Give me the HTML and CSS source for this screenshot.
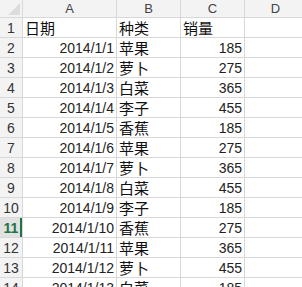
FILE: index.html
```html
<!DOCTYPE html>
<html lang="zh-CN">
<head>
    <meta charset="UTF-8">
    <title>Sheet1</title>
    <link rel="stylesheet" href="styles.css">
</head>
<body>
    <div class="sheet">
        <div class="corner"><span class="corner-mark"></span></div>
        <div class="col-head">A</div>
        <div class="col-head">B</div>
        <div class="col-head">C</div>
        <div class="col-head">D</div>

        <div class="row-head">1</div>
        <div class="cell txt">日期</div><div class="cell txt">种类</div><div class="cell txt">销量</div><div class="cell"></div>

        <div class="row-head">2</div>
        <div class="cell num">2014/1/1</div><div class="cell txt">苹果</div><div class="cell num">185</div><div class="cell"></div>

        <div class="row-head">3</div>
        <div class="cell num">2014/1/2</div><div class="cell txt">萝卜</div><div class="cell num">275</div><div class="cell"></div>

        <div class="row-head">4</div>
        <div class="cell num">2014/1/3</div><div class="cell txt">白菜</div><div class="cell num">365</div><div class="cell"></div>

        <div class="row-head">5</div>
        <div class="cell num">2014/1/4</div><div class="cell txt">李子</div><div class="cell num">455</div><div class="cell"></div>

        <div class="row-head">6</div>
        <div class="cell num">2014/1/5</div><div class="cell txt">香蕉</div><div class="cell num">185</div><div class="cell"></div>

        <div class="row-head">7</div>
        <div class="cell num">2014/1/6</div><div class="cell txt">苹果</div><div class="cell num">275</div><div class="cell"></div>

        <div class="row-head">8</div>
        <div class="cell num">2014/1/7</div><div class="cell txt">萝卜</div><div class="cell num">365</div><div class="cell"></div>

        <div class="row-head">9</div>
        <div class="cell num">2014/1/8</div><div class="cell txt">白菜</div><div class="cell num">455</div><div class="cell"></div>

        <div class="row-head">10</div>
        <div class="cell num">2014/1/9</div><div class="cell txt">李子</div><div class="cell num">185</div><div class="cell"></div>

        <div class="row-head active">11</div>
        <div class="cell num">2014/1/10</div><div class="cell txt">香蕉</div><div class="cell num">275</div><div class="cell"></div>

        <div class="row-head">12</div>
        <div class="cell num">2014/1/11</div><div class="cell txt">苹果</div><div class="cell num">365</div><div class="cell"></div>

        <div class="row-head">13</div>
        <div class="cell num">2014/1/12</div><div class="cell txt">萝卜</div><div class="cell num">455</div><div class="cell"></div>

        <div class="row-head">14</div>
        <div class="cell num">2014/1/13</div><div class="cell txt">白菜</div><div class="cell num">185</div><div class="cell"></div>
    </div>
</body>
</html>
```

FILE: styles.css
```css
html, body {
    margin: 0;
    padding: 0;
    background: #fff;
    overflow: hidden;
}

.sheet {
    display: grid;
    grid-template-columns: 22px 93px 63px 63px 61px;
    grid-template-rows: 17px repeat(14, 19px);
    gap: 1px;
    background: #d8d8d8;
    width: max-content;
    font-family: "Liberation Sans", "Noto Sans CJK SC", sans-serif;
    font-size: 14px;
    color: #222;
}

.corner {
    position: relative;
    background: #f3f3f3;
}

.corner-mark {
    position: absolute;
    right: 2px;
    bottom: 2px;
    width: 0;
    height: 0;
    border-left: 12px solid transparent;
    border-bottom: 12px solid #dcdcdc;
}

.col-head {
    background: #f3f3f3;
    color: #444;
    font-size: 13px;
    display: flex;
    align-items: center;
    justify-content: center;
}

.row-head {
    background: #f3f3f3;
    color: #333;
    font-size: 14px;
    display: flex;
    align-items: center;
    justify-content: center;
}

.row-head.active {
    background: #e1e1e1;
    color: #217346;
    box-shadow: inset -2px 0 0 #217346;
    font-weight: bold;
}

.cell {
    background: #fff;
    display: flex;
    align-items: center;
    padding: 0 2px;
    white-space: nowrap;
    overflow: hidden;
}

.cell.txt {
    font-size: 15px;
    color: #111;
}

.cell.num {
    justify-content: flex-end;
}
```
